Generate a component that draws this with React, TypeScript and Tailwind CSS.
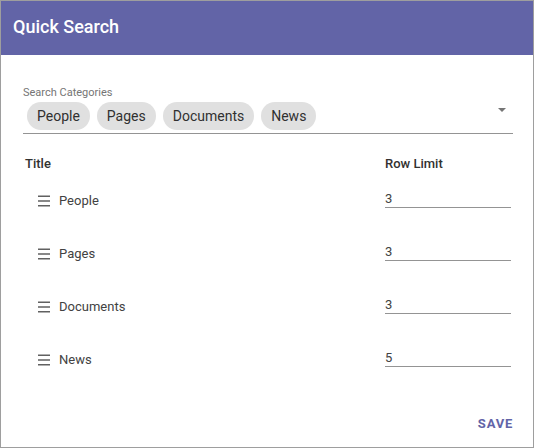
import React from 'react';

const categories = ['People', 'Pages', 'Documents', 'News'];

const rows = [
  { title: 'People', limit: '3' },
  { title: 'Pages', limit: '3' },
  { title: 'Documents', limit: '3' },
  { title: 'News', limit: '5' },
];

const DragHandle: React.FC = () => (
  <svg width="12" height="12" viewBox="0 0 12 12" className="shrink-0">
    <rect x="0" y="0.5" width="12" height="1.5" fill="#616161" />
    <rect x="0" y="5.25" width="12" height="1.5" fill="#616161" />
    <rect x="0" y="10" width="12" height="1.5" fill="#616161" />
  </svg>
);

const App: React.FC = () => {
  return (
    <div
      className="flex h-[448px] w-[534px] flex-col border border-[#9e9e9e] bg-white"
      style={{ fontFamily: 'Roboto, "Liberation Sans", sans-serif' }}
    >
      {/* header */}
      <div className="flex h-[54px] shrink-0 items-center bg-[#6264a7] pb-[4px] pl-[12px]">
        <h1 className="text-[18px] font-medium text-white">Quick Search</h1>
      </div>

      <div className="flex flex-1 flex-col pl-[22px] pr-[20px]">
        {/* category select */}
        <div className="mt-[31px] text-[11px] leading-[13px] text-[#757575]">Search Categories</div>
        <div className="mt-[3px] flex border-b border-[#949494] pb-[3px]">
          <div className="ml-[4px] flex flex-1 gap-[7px]">
            {categories.map((c) => (
              <span
                key={c}
                className="flex h-[28px] items-center rounded-full bg-[#e0e0e0] px-[10px] text-[14px] text-[#303030]"
              >
                {c}
              </span>
            ))}
          </div>
          <svg width="8" height="4" viewBox="0 0 8 4" className="mr-[7px] mt-[6px]">
            <path d="M0 0h8L4 4z" fill="#757575" />
          </svg>
        </div>

        {/* table */}
        <div className="mt-[23px] grid grid-cols-[362px_126px] text-[13px] font-medium leading-[14px] text-[#323130]">
          <div className="pl-[2px]">Title</div>
          <div>Row Limit</div>
        </div>

        {rows.map((r) => (
          <div key={r.title} className="grid h-[53px] grid-cols-[362px_126px]">
            <div className="flex items-center self-start pl-[15px] pt-[22px]">
              <DragHandle />
              <span className="ml-[9px] text-[13px] leading-[15px] text-[#424242]">{r.title}</span>
            </div>
            <div className="self-start border-b border-[#949494] pb-[1px] pt-[20px] text-[13px] leading-[15px] text-[#424242]">
              {r.limit}
            </div>
          </div>
        ))}

        <div className="mt-auto mb-[16px] flex justify-end">
          <button className="text-[13px] font-bold leading-[15px] tracking-[0.06em] text-[#6264a7]">SAVE</button>
        </div>
      </div>
    </div>
  );
};

export default App;
